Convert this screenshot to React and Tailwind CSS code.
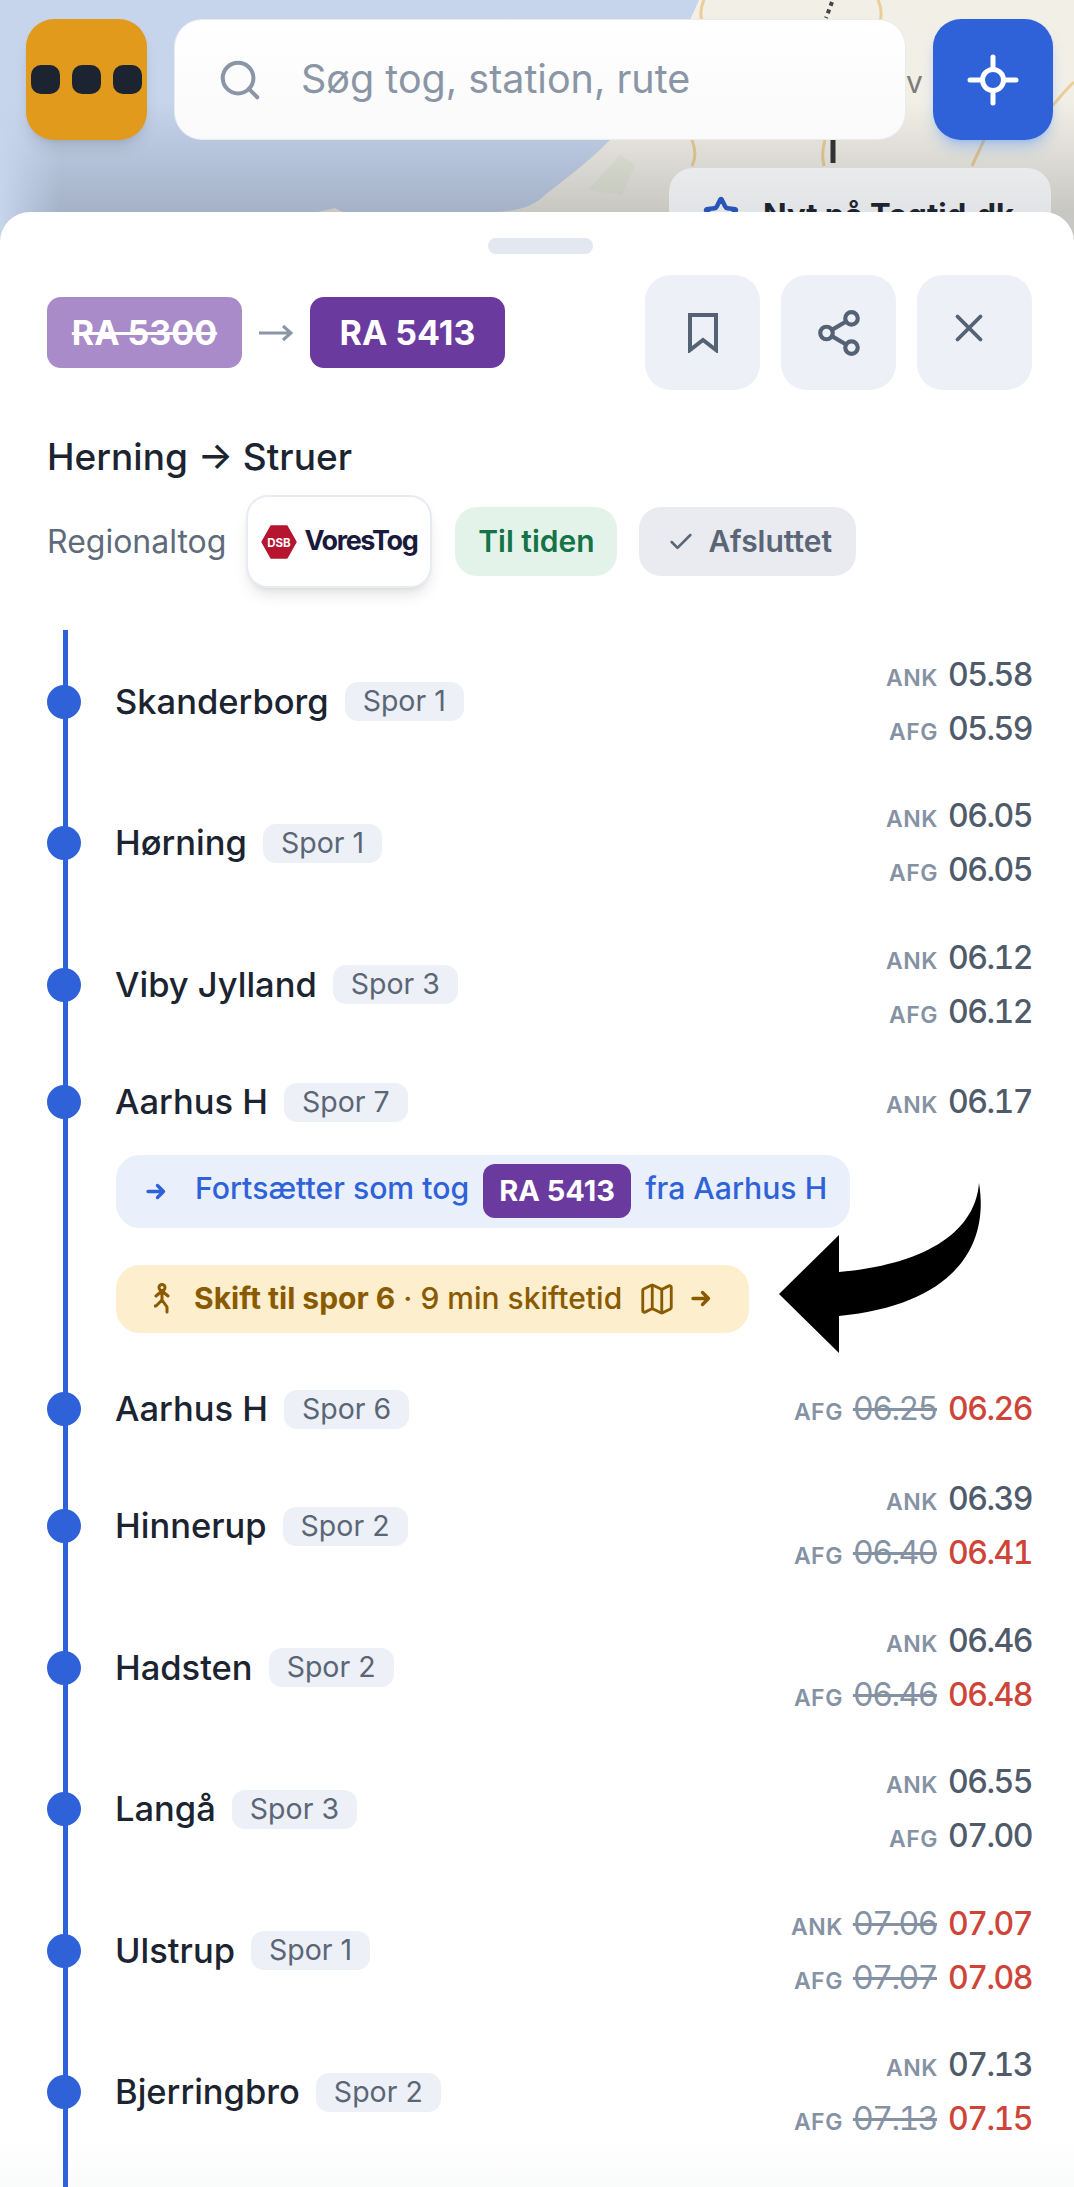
import { Check, Map as MapIcon, Search, Share2, Star, X } from 'lucide-react';

const font = { fontFamily: 'Inter' };

const stationsBefore = [
  { name: 'Skanderborg', track: 'Spor 1', ank: { time: '05.58' }, afg: { time: '05.59' } },
  { name: 'Hørning', track: 'Spor 1', ank: { time: '06.05' }, afg: { time: '06.05' } },
  { name: 'Viby Jylland', track: 'Spor 3', ank: { time: '06.12' }, afg: { time: '06.12' } },
  { name: 'Aarhus H', track: 'Spor 7', ank: { time: '06.17' } },
];

const stationsAfter = [
  { name: 'Aarhus H', track: 'Spor 6', afg: { old: '06.25', time: '06.26' } },
  { name: 'Hinnerup', track: 'Spor 2', ank: { time: '06.39' }, afg: { old: '06.40', time: '06.41' } },
  { name: 'Hadsten', track: 'Spor 2', ank: { time: '06.46' }, afg: { old: '06.46', time: '06.48' } },
  { name: 'Langå', track: 'Spor 3', ank: { time: '06.55' }, afg: { time: '07.00' } },
  { name: 'Ulstrup', track: 'Spor 1', ank: { old: '07.06', time: '07.07' }, afg: { old: '07.07', time: '07.08' } },
  { name: 'Bjerringbro', track: 'Spor 2', ank: { time: '07.13' }, afg: { old: '07.13', time: '07.15' } },
];

function TimeLine({ label, value }) {
  return (
    <div className="flex items-baseline justify-end h-[54px] leading-[54px] tabular-nums">
      <span className="text-[23px] font-semibold tracking-[0.5px] text-[#8592a3] mr-[10px]">{label}</span>
      {value.old && <span className="text-[32px] tracking-[-1.5px] line-through text-[#8592a3] mr-[11px]">{value.old}</span>}
      <span className={`text-[32px] tracking-[-1.5px] font-medium ${value.old ? 'text-[#cf4438]' : 'text-[#4f5b6b]'}`}>{value.time}</span>
    </div>
  );
}

function Station({ station }) {
  const both = station.ank && station.afg;
  return (
    <div className={`relative flex items-center justify-between pl-[115px] pr-[42px] ${both ? 'h-[141.5px]' : 'h-[93px]'}`}>
      <div className="absolute left-[47px] top-1/2 -translate-y-1/2 w-[34px] h-[34px] rounded-full bg-[#2f62d9]" />
      <div className="flex items-center gap-[16px]">
        <span className="text-[34.5px] font-medium text-[#1b2430]">{station.name}</span>
        <span className="h-[39px] px-[18px] flex items-center rounded-[13px] bg-[#edf0f6] text-[28.5px] text-[#5a6676]">{station.track}</span>
      </div>
      <div>
        {station.ank && <TimeLine label="ANK" value={station.ank} />}
        {station.afg && <TimeLine label="AFG" value={station.afg} />}
      </div>
    </div>
  );
}

function IconButton({ children }) {
  return (
    <button className="w-[115px] h-[115px] rounded-[26px] bg-[#edf0f6] flex items-center justify-center text-[#556274]">
      {children}
    </button>
  );
}

function WalkIcon() {
  return (
    <svg width="16" height="31" viewBox="0 0 16 31" fill="none" stroke="#8a5a00" strokeWidth="3" strokeLinecap="round" strokeLinejoin="round" className="shrink-0">
      <circle cx="8" cy="4.5" r="3" />
      <path d="M2 13l6-5 6 5M8 8v9M8 17l-6 6-1 0M8 17l5 7v5" />
    </svg>
  );
}

function SmallArrow({ className }) {
  return (
    <svg width="20" height="17" viewBox="0 0 20 17" fill="none" stroke="currentColor" strokeWidth="3.4" strokeLinecap="round" strokeLinejoin="round" className={className}>
      <path d="M2 8.5H17.5M11.5 2.5l6 6-6 6" />
    </svg>
  );
}

export default function App() {
  return (
    <div style={font} className="relative w-[1074px] h-[2187px] overflow-hidden flex flex-col bg-white">
      {/* map behind the header */}
      <svg className="absolute top-0 left-0" width="1074" height="240" viewBox="0 0 1074 240">
        <defs>
          <linearGradient id="shade" x1="0" y1="0" x2="0" y2="1">
            <stop offset="0" stopColor="#1f2937" stopOpacity="0" />
            <stop offset="0.42" stopColor="#1f2937" stopOpacity="0" />
            <stop offset="0.88" stopColor="#1f2937" stopOpacity="0.2" />
          </linearGradient>
          <linearGradient id="edge" x1="0" y1="0" x2="1" y2="0">
            <stop offset="0" stopColor="#c6d4ec" stopOpacity="1" />
            <stop offset="1" stopColor="#c6d4ec" stopOpacity="0" />
          </linearGradient>
        </defs>
        <rect width="1074" height="240" fill="#c6d4ec" />
        <path d="M699 0L1074 0L1074 240L480 240L490 212C520 212 535 205 545 195C570 175 585 165 610 140L690 20Z" fill="#f2efe6" />
        <path d="M300 216L335 208L350 216Z" fill="#f2efe6" />
        <path d="M588 190L620 155L635 165L622 195Z" fill="#e9ecdc" />
        <path d="M704 0C700 8 700 14 702 22M878 0C882 8 882 14 880 22M692 140C696 150 696 158 692 166M825 140C822 150 822 158 824 166M984 140L972 166M1074 82C1065 90 1060 98 1050 108" stroke="#eccd95" strokeWidth="3" fill="none" />
        <path d="M833 140V163" stroke="#333" strokeWidth="5" />
        <path d="M832 2L826 18" stroke="#444" strokeWidth="4" strokeDasharray="4 4" fill="none" />
        <rect width="1074" height="240" fill="url(#shade)" />
        <rect width="60" height="240" fill="url(#edge)" />
      </svg>
      <span className="absolute left-[906px] top-[60px] text-[30px] text-[#7d7d78]">v</span>

      {/* top bar */}
      <div className="relative h-[212px] shrink-0">
        <div className="flex items-center gap-[27px] pl-[26px] pr-[21px] pt-[19px]">
          <button className="w-[121px] h-[121px] rounded-[28px] bg-[#e29a1c] shadow-lg flex items-center justify-center gap-[12px]">
            <span className="w-[29px] h-[29px] rounded-[10px] bg-[#1b2430]" />
            <span className="w-[29px] h-[29px] rounded-[10px] bg-[#1b2430]" />
            <span className="w-[29px] h-[29px] rounded-[10px] bg-[#1b2430]" />
          </button>
          <div className="w-[732px] h-[121px] rounded-[28px] bg-gradient-to-b from-white to-[#fafafa] border border-[#e8ebf0] flex items-center pl-[42px] gap-[38px]">
            <Search size={46} strokeWidth={2.1} className="text-[#8a96a5]" />
            <span className="text-[39.5px] text-[#8a96a5]">Søg tog, station, rute</span>
          </div>
          <button className="w-[120px] h-[121px] rounded-[28px] bg-[#2f62d9] shadow-lg shadow-blue-500/30 flex items-center justify-center">
            <svg width="52" height="52" viewBox="0 0 52 52" fill="none" stroke="white" strokeWidth="5" strokeLinecap="round">
              <circle cx="26" cy="26" r="10.5" />
              <path d="M26 3v10M26 39v10M3 26h10M39 26h10" />
            </svg>
          </button>
        </div>
        <div className="absolute left-[669px] top-[168px] w-[382px] h-[100px] rounded-[24px] bg-gradient-to-b from-[#eaebed] to-[#d8dadd] flex items-start pl-[34px] pt-[28px] gap-[24px]">
          <Star size={36} strokeWidth={3} className="text-[#2a55b8] shrink-0" />
          <span className="text-[31px] leading-[44px] font-bold text-[#1b2430] whitespace-nowrap -mt-[3px]">Nyt på Togtid.dk</span>
        </div>
      </div>

      {/* sheet */}
      <div className="relative flex-1 bg-white rounded-t-[30px]">
        <div className="absolute left-0 right-0 bottom-0 h-[50px] bg-gradient-to-b from-white/0 to-[#f7f8f9]/60" />

        <div className="relative w-[105px] h-[16px] rounded-full bg-[#e3e7ef] ml-[488px] mt-[26px]" />

        <div className="relative flex items-start justify-between pl-[47px] pr-[42px] mt-[21px]">
          <div className="flex items-center mt-[22px]">
            <span className="w-[195px] h-[71px] rounded-[14px] bg-[#a88bc8] text-white text-[34px] font-bold line-through flex items-center justify-center">RA 5300</span>
            <svg width="36" height="18" viewBox="0 0 36 18" fill="none" stroke="#8a96a5" strokeWidth="3" className="mx-[16px]">
              <path d="M1 9H33M25 2l8 7-8 7" />
            </svg>
            <span className="w-[195px] h-[71px] rounded-[14px] bg-[#6b3a9f] text-white text-[34px] font-bold flex items-center justify-center">RA 5413</span>
          </div>
          <div className="flex gap-[21px]">
            <IconButton>
              <svg width="30" height="40" viewBox="0 0 30 40" fill="none" stroke="currentColor" strokeWidth="4">
                <path d="M2 2H28V37L15 27L2 37Z" />
              </svg>
            </IconButton>
            <IconButton><Share2 size={50} strokeWidth={2} /></IconButton>
            <IconButton><X size={46} strokeWidth={2} className="-translate-x-[6px] -translate-y-[5px]" /></IconButton>
          </div>
        </div>

        <div className="pl-[47px] mt-[40px] text-[37px] leading-[54px] font-medium text-[#1b2430]">Herning → Struer</div>

        <div className="flex items-center pl-[47px] mt-[11px] h-[93px]">
          <span className="text-[32px] text-[#5f6b7a] mr-[20px]">Regionaltog</span>
          <div className="w-[186px] h-[93px] rounded-[22px] bg-white border-2 border-[#e8ebf2] shadow-lg flex items-center justify-center gap-[7px] mr-[23px]">
            <svg width="36" height="34" viewBox="0 0 36 34" className="shrink-0">
              <polygon points="10,1 26,1 35,17 26,33 10,33 1,17" fill="#b7152f" stroke="#b7152f" strokeWidth="1.5" strokeLinejoin="round" />
              <text x="18" y="21.5" textAnchor="middle" fill="white" fontSize="11.5" fontWeight="700">DSB</text>
            </svg>
            <span className="text-[27px] font-bold tracking-[-1.4px] text-[#1a1a3c]">VoresTog</span>
          </div>
          <span className="h-[69px] w-[162px] flex items-center justify-center rounded-[22px] bg-[#e4f3ea] text-[30px] font-semibold text-[#157347] mr-[22px]">Til tiden</span>
          <span className="h-[69px] pl-[28px] pr-[24px] flex items-center gap-[13px] rounded-[22px] bg-[#e9ebf0] text-[30px] font-semibold text-[#5a6676]">
            <Check size={28} strokeWidth={2.2} />
            Afsluttet
          </span>
        </div>

        {/* timeline */}
        <div className="relative mt-[43px]">
          <div className="absolute left-[63px] top-[-1px] bottom-[-200px] w-[5px] bg-[#2f62d9]" />
          {stationsBefore.map((s, i) => <Station key={i} station={s} />)}
          <div className="relative pl-[116px] mt-[6px]">
            <div className="w-[734px] h-[73px] rounded-[24px] bg-[#e9effb] flex items-center pl-[30px] text-[30.2px] font-medium text-[#2f62d9] whitespace-nowrap">
              <SmallArrow className="mr-[29px] shrink-0" />
              <span className="pb-[5px]">Fortsætter som tog</span>
              <span className="w-[148px] h-[54px] mx-[14px] rounded-[12px] bg-[#6b3a9f] text-white text-[29px] font-bold flex items-center justify-center">RA 5413</span>
              <span className="pb-[5px]">fra Aarhus H</span>
            </div>
            <div className="w-[633px] h-[68px] mt-[37px] rounded-[24px] bg-[#fdeecd] flex items-center pl-[38px] text-[30px] text-[#8a5a00] whitespace-nowrap">
              <WalkIcon />
              <span className="font-bold ml-[24px]">Skift til spor 6</span>
              <span className="ml-[8px] font-medium">· 9 min skiftetid</span>
              <MapIcon size={38} strokeWidth={1.8} className="ml-[16px] shrink-0" />
              <SmallArrow className="ml-[15px] shrink-0" />
            </div>
          </div>
          <div className="relative mt-[30px]">
            {stationsAfter.map((s, i) => <Station key={i} station={s} />)}
          </div>
        </div>

        {/* hand drawn arrow on top of the list */}
        <svg className="absolute left-[770px] top-[960px]" width="220" height="185" viewBox="770 1172 220 185">
          <path d="M979 1183C990 1250 950 1305 839 1316V1353L779 1294L839 1235V1272C920 1265 975 1235 979 1183Z" fill="black" />
        </svg>
      </div>
    </div>
  );
}
